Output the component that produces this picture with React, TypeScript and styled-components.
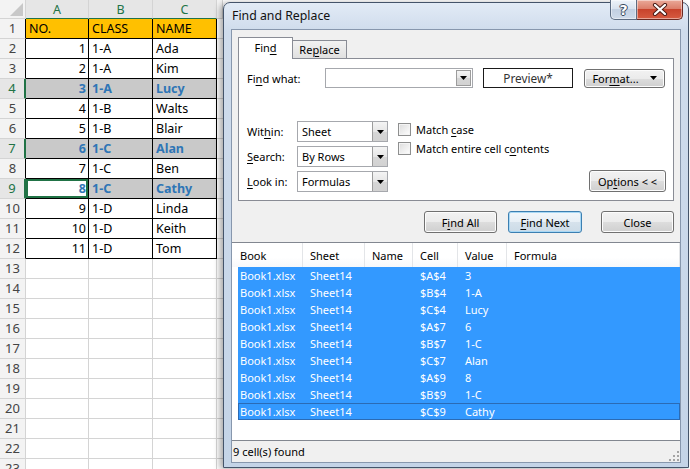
import React from "react";
import styled, { createGlobalStyle, css } from "styled-components";

// palette
const excelGreen = "#217346";
const gridLine = "#d4d4d4";
const foundBlue = "#2e75b6";
const listBlue = "#3399ff";
const winBorder = "#707070";

const GlobalStyle = createGlobalStyle`
  html, body { margin: 0; padding: 0; background: #fff; }
  body { overflow: hidden; font-family: "Noto Sans", "DejaVu Sans", sans-serif; }
`;

const Page = styled.div`
  display: flex;
  align-items: flex-start;
  width: 690px;
  height: 469px;
  overflow: hidden;
  background: #fff;
`;

/* ---------- spreadsheet ---------- */

const Sheet = styled.div`
  display: grid;
  grid-template-columns: 26px 63px 64px 64px 6px;
  grid-template-rows: 19px;
  grid-auto-rows: 20px;
  width: 223px;
  flex-shrink: 0;
  font-size: 12.5px;
`;

const Corner = styled.div`
  background: #f3f3f3;
  border-right: 1px solid ${gridLine};
  border-bottom: 1px solid ${gridLine};
  display: flex;
  align-items: flex-end;
  justify-content: flex-end;
  padding: 0 2px 2px 0;
  box-sizing: border-box;
`;

const ColHead = styled.div<{ $sel?: boolean }>`
  display: flex;
  align-items: center;
  justify-content: center;
  box-sizing: border-box;
  background: ${(p) => (p.$sel ? "#e6e6e6" : "#f3f3f3")};
  color: ${(p) => (p.$sel ? excelGreen : "#444")};
  border-right: 1px solid ${gridLine};
  border-bottom: 1px solid ${(p) => (p.$sel ? excelGreen : gridLine)};
`;

const RowHead = styled.div<{ $sel?: boolean; $boxed?: boolean }>`
  display: flex;
  align-items: center;
  justify-content: center;
  box-sizing: border-box;
  padding-bottom: 1px;
  font-size: 13px;
  background: ${(p) => (p.$sel ? "#e6e6e6" : "#f3f3f3")};
  color: ${(p) => (p.$sel ? excelGreen : "#444")};
  border-bottom: 1px solid ${gridLine};
  border-right: ${(p) =>
    p.$sel ? `2px solid ${excelGreen}` : `1px solid ${p.$boxed ? "#000" : gridLine}`};
`;

const Cell = styled.div<{
  $boxed?: boolean;
  $fill?: string;
  $found?: boolean;
  $active?: boolean;
  $right?: boolean;
  $edge?: boolean;
}>`
  display: flex;
  align-items: center;
  justify-content: ${(p) => (p.$right ? "flex-end" : "flex-start")};
  box-sizing: border-box;
  padding: 0 2px 1px 3px;
  white-space: nowrap;
  overflow: hidden;
  background: ${(p) => p.$fill || "#fff"};
  color: ${(p) => (p.$found ? foundBlue : "#000")};
  font-weight: ${(p) => (p.$found ? 700 : 400)};
  border-bottom: 1px solid ${(p) => (p.$boxed ? "#000" : gridLine)};
  border-right: ${(p) => (p.$edge ? "none" : `1px solid ${p.$boxed ? "#000" : gridLine}`)};
  ${(p) =>
    p.$active &&
    css`
      box-shadow: inset 0 0 0 2px ${excelGreen};
    `}
`;

/* ---------- dialog frame ---------- */

const Dialog = styled.div`
  width: 466px;
  height: 466px;
  margin-top: 2px;
  box-sizing: border-box;
  flex-shrink: 0;
  display: flex;
  flex-direction: column;
  padding: 0 7px 4px;
  border: 1px solid #44546a;
  border-radius: 7px 7px 0 0;
  background: linear-gradient(180deg, #e2ebf6 0%, #cfdcec 28px, #c4d4e7 100%);
  box-shadow: -3px 1px 6px rgba(0, 0, 0, 0.35);
  font-size: 11px;
  color: #000;
`;

const TitleBar = styled.div`
  height: 26px;
  display: flex;
  align-items: center;
  justify-content: space-between;
  padding-left: 1px;
`;

const Title = styled.span`
  font-size: 12.3px;
  color: #111;
  margin-top: -2px;
`;

const Captions = styled.div`
  align-self: flex-start;
  display: flex;
  margin: -3px -2px 0 0;
`;

const CaptionButton = styled.div<{ $close?: boolean }>`
  height: 20px;
  width: ${(p) => (p.$close ? "46px" : "27px")};
  display: flex;
  align-items: center;
  justify-content: center;
  box-sizing: border-box;
  border: 1px solid ${(p) => (p.$close ? "#6b2a22" : "#5c6c82")};
  border-top: none;
  border-left: ${(p) => (p.$close ? "none" : undefined)};
  border-radius: ${(p) => (p.$close ? "0 0 5px 0" : "0 0 0 5px")};
  background: ${(p) =>
    p.$close
      ? "linear-gradient(180deg, #eaa999 0%, #dc7f6b 45%, #c8432c 50%, #d65b41 100%)"
      : "linear-gradient(180deg, #eef3f9 0%, #d9e3ef 45%, #c2d0e2 50%, #cfdbea 100%)"};
  box-shadow: inset 0 0 0 1px rgba(255, 255, 255, 0.45);
`;

const HelpGlyph = styled.span`
  font-family: "DejaVu Sans", sans-serif;
  font-weight: 700;
  font-size: 14px;
  line-height: 1;
  color: #fff;
  text-shadow: 0 0 1px #3b4a5e, 1px 0 0 #3b4a5e, -1px 0 0 #3b4a5e, 0 1px 0 #3b4a5e, 0 -1px 0 #3b4a5e;
`;

const Client = styled.div`
  flex: 1;
  display: flex;
  flex-direction: column;
  background: #f0f0f0;
  border: 1px solid #8797ad;
  min-height: 0;
`;

/* ---------- tabs ---------- */

const TabRow = styled.div`
  display: flex;
  align-items: flex-end;
  padding: 7px 0 0 6px;
`;

const Tab = styled.div<{ $active?: boolean }>`
  display: flex;
  align-items: center;
  justify-content: center;
  box-sizing: border-box;
  border: 1px solid #898c95;
  border-bottom: none;
  ${(p) =>
    p.$active
      ? css`
          width: 55px;
          height: 22px;
          margin-bottom: -1px;
          background: #fff;
          position: relative;
          z-index: 1;
          padding-bottom: 2px;
        `
      : css`
          width: 54px;
          height: 18px;
          border-left: none;
          background: linear-gradient(180deg, #f2f2f2, #e0e0e0);
        `}
`;

const Panel = styled.div`
  height: 143px;
  box-sizing: border-box;
  margin: 0 6px 0 6px;
  padding: 9px 7px 0 8px;
  border: 1px solid #898c95;
  background: #fff;
  display: flex;
  flex-direction: column;
`;

const FindRow = styled.div`
  display: flex;
  align-items: center;
  height: 20px;
`;

const Label = styled.span<{ $w?: number }>`
  width: ${(p) => (p.$w ? `${p.$w}px` : "auto")};
  flex-shrink: 0;
  white-space: nowrap;
`;

const U = styled.span`
  text-decoration: underline;
  text-underline-offset: 2px;
`;

const Combo = styled.div<{ $w: number; $h: number }>`
  width: ${(p) => p.$w}px;
  height: ${(p) => p.$h}px;
  box-sizing: border-box;
  display: flex;
  align-items: stretch;
  border: 1px solid #a6a8ad;
  background: #fff;
`;

const ComboText = styled.span`
  flex: 1;
  display: flex;
  align-items: center;
  padding-left: 4px;
`;

const ArrowBox = styled.span<{ $inset?: boolean }>`
  width: 15px;
  display: flex;
  align-items: center;
  justify-content: center;
  box-sizing: border-box;
  margin: ${(p) => (p.$inset ? "1px" : "0")};
  border: 1px solid #9c9c9c;
  ${(p) => !p.$inset && "border-width: 0 0 0 1px;"}
  background: linear-gradient(180deg, #f4f4f4 0%, #e6e6e6 50%, #d6d6d6 51%, #d2d2d2 100%);
`;

const Preview = styled.div`
  width: 90px;
  height: 20px;
  box-sizing: border-box;
  margin-left: 10px;
  border: 1px solid #1a1a1a;
  display: flex;
  align-items: center;
  justify-content: center;
  font-size: 11.8px;
  color: #333;
`;

const Button = styled.div<{ $w: number; $h?: number; $default?: boolean; $ml?: number }>`
  width: ${(p) => p.$w}px;
  height: ${(p) => p.$h ?? 22}px;
  margin-left: ${(p) => p.$ml ?? 0}px;
  box-sizing: border-box;
  flex-shrink: 0;
  display: flex;
  align-items: center;
  justify-content: center;
  gap: 11px;
  border: 1px solid ${(p) => (p.$default ? "#3c7fb1" : winBorder)};
  border-radius: 3px;
  background: ${(p) =>
    p.$default
      ? "linear-gradient(180deg, #f2f7fb 0%, #e7eff6 50%, #d6e2ec 51%, #ccdbe7 100%)"
      : "linear-gradient(180deg, #f2f2f2 0%, #ebebeb 50%, #dddddd 51%, #cfcfcf 100%)"};
  box-shadow: inset 0 0 0 1px ${(p) => (p.$default ? "#a8d8f5" : "#fcfcfc")};
  white-space: nowrap;
`;

const OptionsArea = styled.div`
  display: flex;
  align-items: flex-start;
  margin-top: 33px;
`;

const SelectGrid = styled.div`
  display: grid;
  grid-template-columns: 50px 91px;
  grid-auto-rows: 21px;
  row-gap: 4px;
  align-items: center;
`;

const CheckCol = styled.div`
  display: flex;
  flex-direction: column;
  gap: 6px;
  margin-left: 10px;
  padding-top: 2px;
`;

const CheckRow = styled.label`
  display: flex;
  align-items: center;
  gap: 5px;
  height: 13px;
`;

const CheckBox = styled.span`
  width: 13px;
  height: 13px;
  box-sizing: border-box;
  border: 1px solid #8e8f8f;
  background: linear-gradient(135deg, #dcdcdc 0%, #f4f4f4 70%, #fff 100%);
  box-shadow: inset 0 0 0 1px #f4f4f4;
`;

const OptionsSlot = styled.div`
  margin-left: auto;
  align-self: flex-end;
`;

const ButtonRow = styled.div`
  display: flex;
  justify-content: flex-end;
  gap: 11px;
  margin: 10px 6px 0 0;
`;

/* ---------- results list ---------- */

const List = styled.div`
  flex: 1;
  margin-top: 9px;
  background: #fff;
  border-top: 1px solid #828790;
  border-bottom: 1px solid #828790;
  display: flex;
  flex-direction: column;
`;

const ListHeader = styled.div`
  display: grid;
  grid-template-columns: 71px 62px 48px 45px 49px 1fr;
  height: 24px;
  background: linear-gradient(180deg, #fff 0%, #fff 60%, #f7f8fa 100%);
`;

const HeadCell = styled.div<{ $first?: boolean }>`
  display: flex;
  align-items: center;
  padding-left: ${(p) => (p.$first ? 8 : 7)}px;
  border-right: 1px solid #e3e5e8;
  white-space: nowrap;
`;

const ResultRow = styled.div<{ $focus?: boolean }>`
  display: grid;
  grid-template-columns: 65px 62px 48px 45px 49px 1fr;
  height: 17px;
  margin-left: 6px;
  align-items: center;
  background: ${listBlue};
  color: #fff;
  ${(p) =>
    p.$focus &&
    css`
      box-shadow: inset 0 0 0 1px #2b6bb5;
    `}
`;

const ResultCell = styled.span<{ $first?: boolean }>`
  padding-left: ${(p) => (p.$first ? 2 : 7)}px;
  white-space: nowrap;
  overflow: hidden;
`;

const StatusBar = styled.div`
  height: 21px;
  display: flex;
  align-items: center;
  padding-left: 1px;
  background: #f0f0f0;
`;

const Grip = styled.svg`
  align-self: flex-end;
  margin: 0 1px 1px auto;
`;

/* ---------- data ---------- */

const people: [number, string, string][] = [
  [1, "1-A", "Ada"],
  [2, "1-A", "Kim"],
  [3, "1-A", "Lucy"],
  [4, "1-B", "Walts"],
  [5, "1-B", "Blair"],
  [6, "1-C", "Alan"],
  [7, "1-C", "Ben"],
  [8, "1-C", "Cathy"],
  [9, "1-D", "Linda"],
  [10, "1-D", "Keith"],
  [11, "1-D", "Tom"],
];

const foundRows = [4, 7, 9];

const results: [string, string][] = [
  ["$A$4", "3"],
  ["$B$4", "1-A"],
  ["$C$4", "Lucy"],
  ["$A$7", "6"],
  ["$B$7", "1-C"],
  ["$C$7", "Alan"],
  ["$A$9", "8"],
  ["$B$9", "1-C"],
  ["$C$9", "Cathy"],
];

const Arrow = () => (
  <svg width="7" height="4" viewBox="0 0 7 4">
    <path d="M0 0h7L3.5 4z" fill="#000" />
  </svg>
);

function Spreadsheet() {
  const rows = Array.from({ length: 23 }, (_, i) => i + 1);
  return (
    <Sheet>
      <Corner>
        <svg width="13" height="13" viewBox="0 0 13 13">
          <path d="M13 0V13H0z" fill="#c8c8c8" />
        </svg>
      </Corner>
      {["A", "B", "C"].map((l) => (
        <ColHead key={l} $sel>
          {l}
        </ColHead>
      ))}
      <ColHead />
      {rows.map((r) => {
        const found = foundRows.includes(r);
        const boxed = r <= 12;
        let values: (string | number)[] = ["", "", ""];
        if (r === 1) values = ["NO.", "CLASS", "NAME"];
        else if (r <= 12) values = people[r - 2];
        const fill = r === 1 ? "#ffc000" : found ? "#c9c9c9" : "#fff";
        return (
          <React.Fragment key={r}>
            <RowHead $sel={found} $boxed={boxed}>
              {r}
            </RowHead>
            {values.map((v, c) => {
              const active = r === 9 && c === 0;
              return (
                <Cell
                  key={c}
                  $boxed={boxed}
                  $fill={active ? "#fff" : fill}
                  $found={found}
                  $active={active}
                  $right={typeof v === "number"}
                >
                  {v}
                </Cell>
              );
            })}
            <Cell $edge />
          </React.Fragment>
        );
      })}
    </Sheet>
  );
}

function FindReplaceDialog() {
  return (
    <Dialog>
      <TitleBar>
        <Title>Find and Replace</Title>
        <Captions>
          <CaptionButton>
            <HelpGlyph>?</HelpGlyph>
          </CaptionButton>
          <CaptionButton $close>
            <svg width="16" height="13" viewBox="0 0 16 13">
              <path d="M3 2L13 11M13 2L3 11" stroke="#4a1a14" strokeWidth="4.2" strokeLinecap="round" />
              <path d="M3 2L13 11M13 2L3 11" stroke="#fff" strokeWidth="2.3" strokeLinecap="round" />
            </svg>
          </CaptionButton>
        </Captions>
      </TitleBar>

      <Client>
        <TabRow>
          <Tab $active>
            <span>
              Fin<U>d</U>
            </span>
          </Tab>
          <Tab>
            <span>
              Re<U>p</U>lace
            </span>
          </Tab>
        </TabRow>

        <Panel>
          <FindRow>
            <Label $w={78}>
              Fi<U>n</U>d what:
            </Label>
            <Combo $w={148} $h={20}>
              <ComboText />
              <ArrowBox $inset>
                <Arrow />
              </ArrowBox>
            </Combo>
            <Preview>Preview*</Preview>
            <Button $w={81} $h={19} $ml={11}>
              <span>
                For<U>m</U>at...
              </span>
              <Arrow />
            </Button>
          </FindRow>

          <OptionsArea>
            <SelectGrid>
              <Label>
                Wit<U>h</U>in:
              </Label>
              <Combo $w={91} $h={21}>
                <ComboText>Sheet</ComboText>
                <ArrowBox>
                  <Arrow />
                </ArrowBox>
              </Combo>
              <Label>
                <U>S</U>earch:
              </Label>
              <Combo $w={91} $h={21}>
                <ComboText>By Rows</ComboText>
                <ArrowBox>
                  <Arrow />
                </ArrowBox>
              </Combo>
              <Label>
                <U>L</U>ook in:
              </Label>
              <Combo $w={91} $h={21}>
                <ComboText>Formulas</ComboText>
                <ArrowBox>
                  <Arrow />
                </ArrowBox>
              </Combo>
            </SelectGrid>

            <CheckCol>
              <CheckRow>
                <CheckBox />
                <span>
                  Match <U>c</U>ase
                </span>
              </CheckRow>
              <CheckRow>
                <CheckBox />
                <span>
                  Match entire cell c<U>o</U>ntents
                </span>
              </CheckRow>
            </CheckCol>

            <OptionsSlot>
              <Button $w={77}>
                <span>
                  Op<U>t</U>ions &lt; &lt;
                </span>
              </Button>
            </OptionsSlot>
          </OptionsArea>
        </Panel>

        <ButtonRow>
          <Button $w={73}>
            <span>
              F<U>i</U>nd All
            </span>
          </Button>
          <Button $w={74} $default>
            <span>
              <U>F</U>ind Next
            </span>
          </Button>
          <Button $w={73} $ml={8}>
            <span>Close</span>
          </Button>
        </ButtonRow>

        <List>
          <ListHeader>
            <HeadCell $first>Book</HeadCell>
            <HeadCell>Sheet</HeadCell>
            <HeadCell>Name</HeadCell>
            <HeadCell>Cell</HeadCell>
            <HeadCell>Value</HeadCell>
            <HeadCell>Formula</HeadCell>
          </ListHeader>
          {results.map(([cell, value], i) => (
            <ResultRow key={cell} $focus={i === results.length - 1}>
              <ResultCell $first>Book1.xlsx</ResultCell>
              <ResultCell>Sheet14</ResultCell>
              <ResultCell />
              <ResultCell>{cell}</ResultCell>
              <ResultCell>{value}</ResultCell>
              <ResultCell />
            </ResultRow>
          ))}
        </List>

        <StatusBar>
          <span>9 cell(s) found</span>
          <Grip width="10" height="10" viewBox="0 0 10 10">
            {[
              [8, 0],
              [8, 4],
              [4, 4],
              [8, 8],
              [4, 8],
              [0, 8],
            ].map(([x, y]) => (
              <rect key={`${x}-${y}`} x={x} y={y} width="2" height="2" fill="#a4a4a4" />
            ))}
          </Grip>
        </StatusBar>
      </Client>
    </Dialog>
  );
}

export default function App() {
  return (
    <>
      <GlobalStyle />
      <Page>
        <Spreadsheet />
        <FindReplaceDialog />
      </Page>
    </>
  );
}
